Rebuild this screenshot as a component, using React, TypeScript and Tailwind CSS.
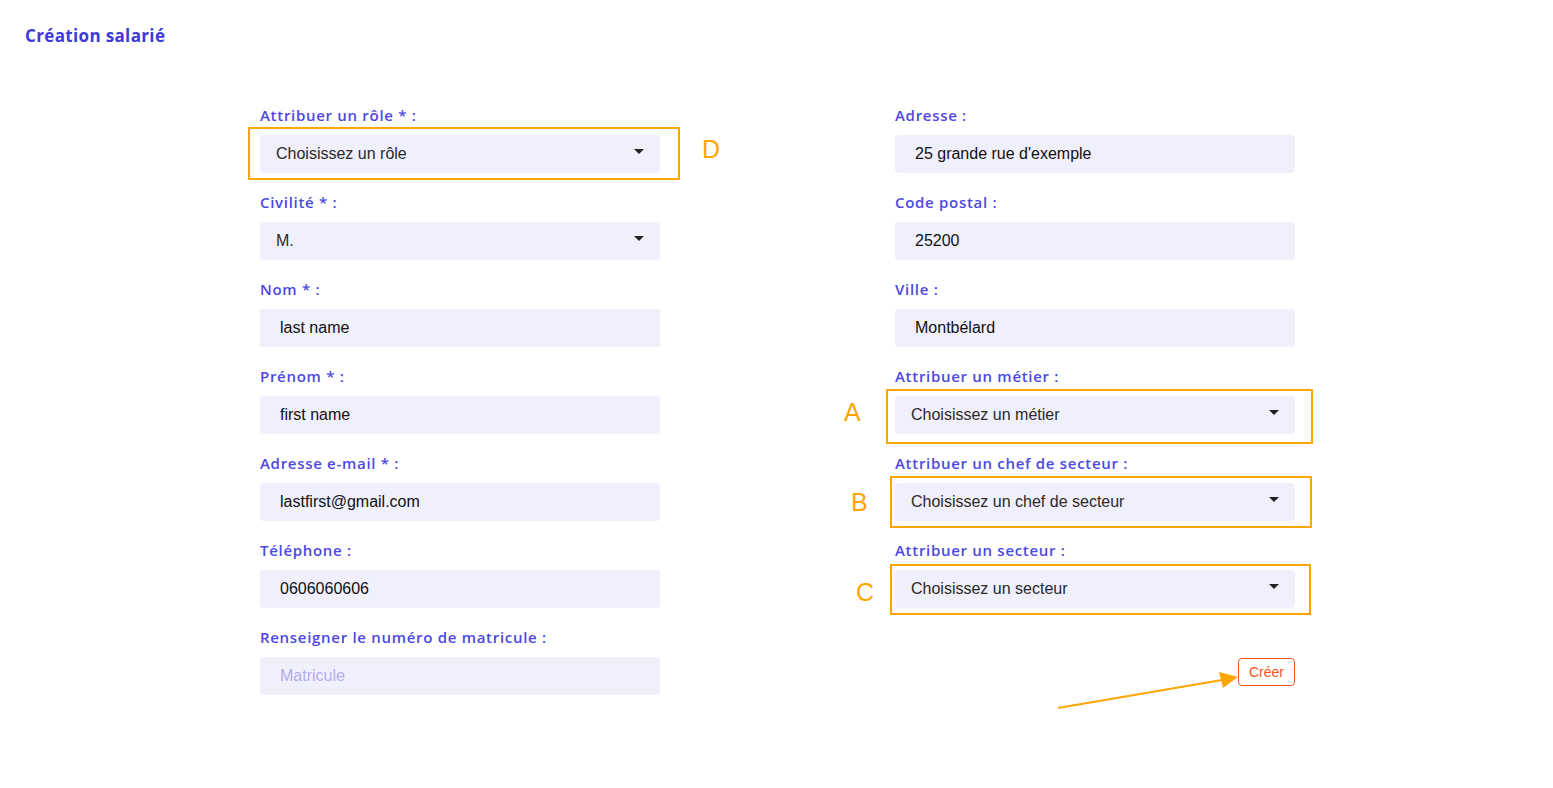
import React from "react";

const labelCls =
  "block text-[15px] leading-5 font-semibold tracking-[0.7px] text-[#4d48e2] mb-[10px] [font-family:'Open_Sans',sans-serif]";
const boxCls =
  "h-[38px] w-full rounded-[4px] bg-[#f0effc] flex items-center text-[16px] [font-family:'Liberation_Sans',Arial,sans-serif]";

function Caret() {
  return (
    <svg width="10" height="5" viewBox="0 0 10 5" className="shrink-0 -translate-y-[3px]">
      <path d="M0 0 L10 0 L5 5 Z" fill="#222" />
    </svg>
  );
}

function Field({ label, children }: { label: string; children: React.ReactNode }) {
  return (
    <div className="mb-[19px]">
      <label className={labelCls}>{label}</label>
      {children}
    </div>
  );
}

function Input({ value, placeholder }: { value?: string; placeholder?: string }) {
  return (
    <div className={boxCls + " pl-5"}>
      {value ? (
        <span className="text-[#111]">{value}</span>
      ) : (
        <span className="text-[#b3adf3]">{placeholder}</span>
      )}
    </div>
  );
}

function Select({ value }: { value: string }) {
  return (
    <div className={boxCls + " pl-4 pr-[16px] justify-between"}>
      <span className="text-[#2a2a2a]">{value}</span>
      <Caret />
    </div>
  );
}

function Note({
  letter,
  box,
  letterPos,
}: {
  letter: string;
  box: string;
  letterPos: string;
}) {
  return (
    <>
      <div className={"pointer-events-none absolute border-2 border-[#ffa500] " + box} />
      <span
        className={
          "pointer-events-none absolute text-[25px] leading-none text-[#ffa500] [font-family:'Liberation_Sans',Arial,sans-serif] " +
          letterPos
        }
      >
        {letter}
      </span>
    </>
  );
}

export default function App() {
  return (
    <div className="min-h-[788px] w-full bg-white">
      <h1 className="pl-[25px] pt-[25px] text-[17px] leading-[22px] font-bold tracking-[0.35px] text-[#3d3ad9] [font-family:'Open_Sans',sans-serif]">
        Création salarié
      </h1>
      <div className="mt-[58px] flex pl-[260px] gap-[235px]">
        <div className="w-[400px] flex flex-col">
          <Field label="Attribuer un rôle * :">
            <div className="relative">
              <Select value="Choisissez un rôle" />
              <Note
                letter="D"
                box="left-[-12px] right-[-20px] top-[-8px] bottom-[-7px]"
                letterPos="left-[442px] top-[2px]"
              />
            </div>
          </Field>
          <Field label="Civilité * :">
            <Select value="M." />
          </Field>
          <Field label="Nom * :">
            <Input value="last name" />
          </Field>
          <Field label="Prénom * :">
            <Input value="first name" />
          </Field>
          <Field label="Adresse e-mail * :">
            <Input value="lastfirst@gmail.com" />
          </Field>
          <Field label="Téléphone :">
            <Input value="0606060606" />
          </Field>
          <Field label="Renseigner le numéro de matricule :">
            <Input placeholder="Matricule" />
          </Field>
        </div>
        <div className="w-[400px] flex flex-col">
          <Field label="Adresse :">
            <Input value="25 grande rue d'exemple" />
          </Field>
          <Field label="Code postal :">
            <Input value="25200" />
          </Field>
          <Field label="Ville :">
            <Input value="Montbélard" />
          </Field>
          <Field label="Attribuer un métier :">
            <div className="relative">
              <Select value="Choisissez un métier" />
              <Note
                letter="A"
                box="left-[-9px] right-[-18px] top-[-7px] bottom-[-10px]"
                letterPos="left-[-51px] top-[4px]"
              />
            </div>
          </Field>
          <Field label="Attribuer un chef de secteur :">
            <div className="relative">
              <Select value="Choisissez un chef de secteur" />
              <Note
                letter="B"
                box="left-[-5px] right-[-17px] top-[-7px] bottom-[-7px]"
                letterPos="left-[-44px] top-[7px]"
              />
            </div>
          </Field>
          <Field label="Attribuer un secteur :">
            <div className="relative">
              <Select value="Choisissez un secteur" />
              <Note
                letter="C"
                box="left-[-5px] right-[-16px] top-[-6px] bottom-[-7px]"
                letterPos="left-[-39px] top-[10px]"
              />
            </div>
          </Field>
          <div className="mt-[31px] flex justify-end">
            <div className="relative">
              <button className="h-[28px] px-[10px] rounded-[4px] border border-[#f4511e] bg-white text-[14px] text-[#f4511e] [font-family:'Liberation_Sans',Arial,sans-serif]">
                Créer
              </button>
              <svg
                className="pointer-events-none absolute left-[-182px] top-[10px] overflow-visible"
                width="184"
                height="45"
                viewBox="0 0 184 45"
              >
                <line x1="2" y1="40" x2="166" y2="12" stroke="#ffa500" strokeWidth="2" />
                <path d="M182 9 L163 4 L167 20 Z" fill="#ffa500" />
              </svg>
            </div>
          </div>
        </div>
      </div>
    </div>
  );
}
